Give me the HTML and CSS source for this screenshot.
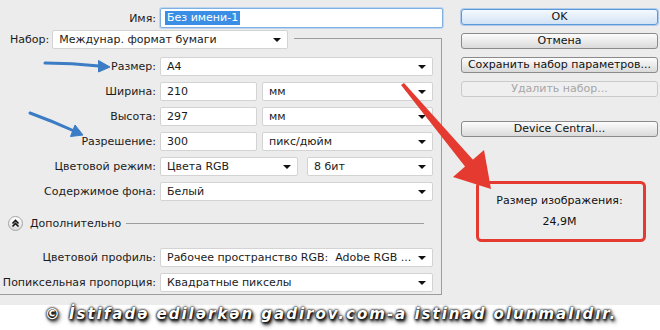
FILE: index.html
```html
<!doctype html>
<html lang="ru">
  <head>
    <meta charset="UTF-8" />
    <meta name="viewport" content="width=device-width, initial-scale=1.0" />
    <title>Новый документ</title>
    <link rel="stylesheet" href="styles.css">
  </head>
  <body>
    <div class="page">
      <div class="dialog">
        <div class="main">
          <div class="name-row">
            <span class="label">Имя:</span>
            <div class="field field-focus"><span class="selected">Без имени-1</span></div>
          </div>

          <fieldset class="group">
            <legend class="preset">
              <span>Набор:</span>
              <div class="select preset-select">Междунар. формат бумаги</div>
            </legend>

            <div class="form-grid">
              <span class="label">Размер:</span>
              <div class="select">A4</div>

              <span class="label">Ширина:</span>
              <div class="pair">
                <div class="field">210</div>
                <div class="select">мм</div>
              </div>

              <span class="label">Высота:</span>
              <div class="pair">
                <div class="field">297</div>
                <div class="select">мм</div>
              </div>

              <span class="label">Разрешение:</span>
              <div class="pair">
                <div class="field">300</div>
                <div class="select">пикс/дюйм</div>
              </div>

              <span class="label">Цветовой режим:</span>
              <div class="pair pair-mode">
                <div class="select">Цвета RGB</div>
                <div class="select">8 бит</div>
              </div>

              <span class="label">Содержимое фона:</span>
              <div class="select">Белый</div>
            </div>

            <div class="advanced">
              <span class="toggle">
                <svg width="9" height="9" viewBox="0 0 9 9">
                  <path d="M1.5 4.5 L4.5 1.5 L7.5 4.5 M1.5 7.5 L4.5 4.5 L7.5 7.5" fill="none" stroke="#111" stroke-width="1.6" />
                </svg>
              </span>
              <span class="advanced-text">Дополнительно</span>
              <span class="rule"></span>
            </div>

            <div class="form-grid form-grid-tight">
              <span class="label">Цветовой профиль:</span>
              <div class="select pre">Рабочее пространство RGB:  Adobe RGB ...</div>

              <span class="label">Попиксельная пропорция:</span>
              <div class="select">Квадратные пикселы</div>
            </div>
          </fieldset>
        </div>

        <div class="side">
          <div class="btn btn-default">OK</div>
          <div class="btn">Отмена</div>
          <div class="btn">Сохранить набор параметров...</div>
          <div class="btn btn-disabled">Удалить набор...</div>
          <div class="btn btn-gap">Device Central...</div>
          <div class="info">
            <div class="info-line">Размер изображения:</div>
            <div class="info-line info-value">24,9M</div>
          </div>
        </div>
      </div>

      <div class="watermark">© İstifadə edilərkən gadirov.com-a istinad olunmalıdır.</div>

      <!-- annotation arrows drawn over the dialog -->
      <svg class="annotations" width="660" height="330" viewBox="0 0 660 330">
        <g fill="#3b7cc4" stroke="#3b7cc4">
          <path d="M45 63 Q72 63 99 66" fill="none" stroke-width="3" stroke-linecap="round" />
          <polygon points="110,67 98.5,60.5 98.5,72" stroke-width="1" />
          <path d="M30 113 Q52 121 73 130.5" fill="none" stroke-width="3" stroke-linecap="round" />
          <polygon points="83,135 70.5,136.5 75,125" stroke-width="1" />
        </g>
        <g fill="#e53a30">
          <path d="M401 85 L404 83 L475 162 L467 169 Z" />
          <polygon points="491,189 453,177 484,150" />
        </g>
        <rect x="477.5" y="182.5" width="167" height="58" rx="4" fill="none" stroke="#e53a30" stroke-width="3" />
      </svg>
    </div>
  </body>
</html>
```

FILE: styles.css
```css
body {
  margin: 0;
  font-family: "DejaVu Sans", Verdana, sans-serif;
  font-size: 11px;
  color: #1b1b1b;
  background-color: #fff;
}

.page {
  position: relative;
  width: 660px;
  height: 330px;
  overflow: hidden;
}

.dialog {
  display: flex;
  height: 305px;
  background-color: #ececec;
}

.main {
  flex: none;
  width: 444px;
}

.label {
  box-sizing: border-box;
  width: 160px;
  padding-right: 4px;
  text-align: right;
  white-space: nowrap;
}

.name-row {
  display: flex;
  align-items: center;
  height: 20px;
  margin-top: 8px;
}

.field,
.select {
  display: flex;
  align-items: center;
  box-sizing: border-box;
  height: 19px;
  padding: 0 6px;
  background-color: #fff;
  border: 1px solid #d3d3d3;
  border-radius: 2px;
  white-space: nowrap;
  overflow: hidden;
}

.select::after {
  content: "";
  flex: none;
  margin-left: auto;
  border-left: 4px solid transparent;
  border-right: 4px solid transparent;
  border-top: 4px solid #111;
}

.pre {
  white-space: pre;
}

.field-focus {
  width: 283px;
  height: 20px;
  padding: 0 4px;
  border-color: #80afe2;
  box-shadow: 0 0 0 1px #bcd6f2;
}

.selected {
  padding: 0 2px;
  background-color: #3a8ee6;
  color: #fff;
  line-height: 14px;
}

.group {
  box-sizing: border-box;
  width: 442px;
  min-width: 0;
  margin: -1px 0 0;
  padding: 0 0 2px;
  border: 1px solid #9d9d9d;
  border-left: none;
}

.preset {
  display: flex;
  align-items: center;
  gap: 3px;
  padding: 3px 6px 0 10px;
}

.preset-select {
  width: 236px;
}

.form-grid {
  display: grid;
  grid-template-columns: 160px 273px;
  grid-auto-rows: 19px;
  row-gap: 6px;
  align-items: center;
  margin-top: 8px;
}

.form-grid-tight {
  margin-top: 0;
}

.pair {
  display: flex;
  gap: 5px;
}

.pair .field {
  width: 97px;
}

.pair .select {
  flex: 1;
}

.pair-mode {
  gap: 9px;
}

.pair-mode .select:first-child {
  flex: none;
  width: 138px;
}

.advanced {
  display: flex;
  align-items: center;
  height: 15px;
  margin: 15px 17px 17px 8px;
}

.toggle {
  display: flex;
  align-items: center;
  justify-content: center;
  box-sizing: border-box;
  width: 15px;
  height: 15px;
  border: 1px solid #a5a5a5;
  border-radius: 50%;
  background: linear-gradient(#ffffff, #dadada);
}

.advanced-text {
  margin-left: 7px;
}

.rule {
  flex: 1;
  height: 1px;
  margin-left: 5px;
  background-color: #9d9d9d;
}

.side {
  display: flex;
  flex-direction: column;
  flex: none;
  width: 197px;
  margin-left: 17px;
}

.btn {
  box-sizing: border-box;
  height: 16px;
  margin-top: 8px;
  border: 1px solid #8b8b8b;
  border-radius: 3px;
  background: linear-gradient(#fdfdfd, #dadada);
  text-align: center;
  line-height: 14px;
  color: #111;
}

.btn-default {
  margin-top: 9px;
  border-color: #5c97d6;
  box-shadow: 0 0 0 1px #aecbed;
  background: linear-gradient(#f4f9ff, #d3e3f5);
}

.btn-disabled {
  border-color: #cacaca;
  background: #efefef;
  color: #a6a6a6;
}

.btn-gap {
  margin-top: 24px;
}

.info {
  margin-top: 57px;
  text-align: center;
  color: #111;
}

.info-line {
  line-height: 14px;
}

.info-value {
  margin-top: 7px;
}

.watermark {
  height: 25px;
  padding-left: 2px;
  line-height: 19px;
  text-align: center;
  white-space: nowrap;
  font-family: "DejaVu Sans", Verdana, sans-serif;
  font-size: 15px;
  font-weight: bold;
  font-style: italic;
  letter-spacing: 2px;
  color: #fff;
  text-shadow: 0 0 2px #000, 0 0 3px #000, 1px 2px 3px #000, 2px 3px 4px #333;
}

.annotations {
  position: absolute;
  top: 0;
  left: 0;
  pointer-events: none;
}
```
